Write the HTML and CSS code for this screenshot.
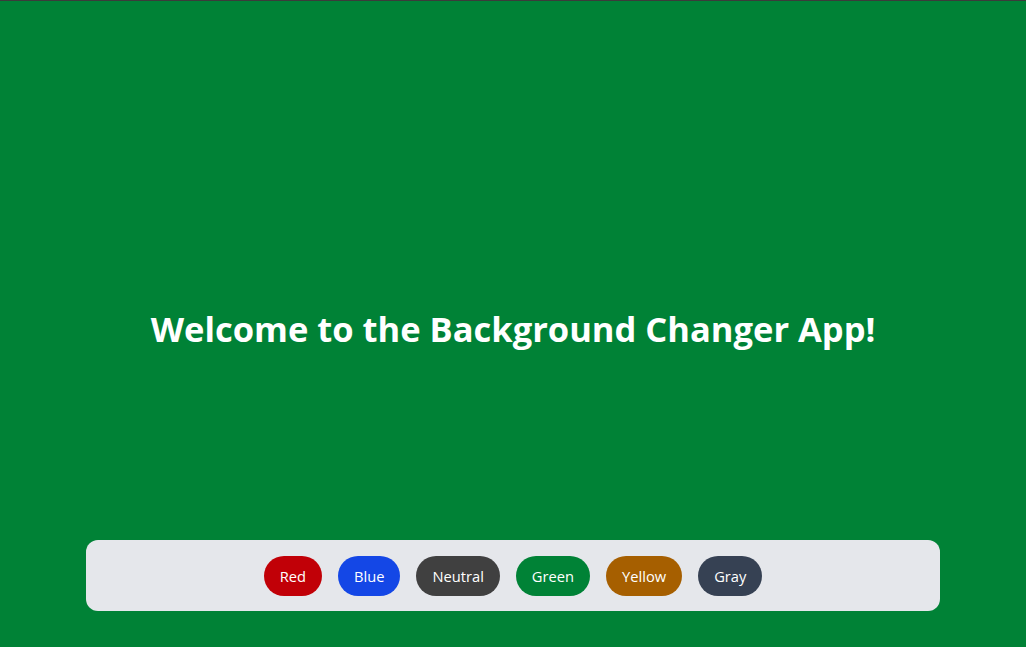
FILE: index.html
```html
<!DOCTYPE html>
<html lang="en">
<head>
<meta charset="UTF-8">
<title>Background Changer</title>
<link rel="stylesheet" href="styles.css">
</head>
<body>
<div class="app">
  <h1 class="title">Welcome to the Background Changer App!</h1>
  <div class="dock">
    <div class="bar">
      <button class="btn red">Red</button>
      <button class="btn blue">Blue</button>
      <button class="btn neutral">Neutral</button>
      <button class="btn green">Green</button>
      <button class="btn yellow">Yellow</button>
      <button class="btn gray">Gray</button>
    </div>
  </div>
</div>
</body>
</html>
```
FILE: styles.css
```css
* { box-sizing: border-box; }
html, body { margin: 0; padding: 0; }
body {
  font-family: "Open Sans", "Noto Sans", sans-serif;
  background: #008236;
  border-top: 1px solid #3b3b3b;
  height: 647px;
  overflow: hidden;
}
.app {
  height: 646px;
  display: grid;
  grid-template: 1fr / 1fr;
}
.title {
  grid-area: 1 / 1;
  margin: 0;
  align-self: center;
  justify-self: center;
  padding-top: 10px;
  color: #fff;
  font-size: 34.5px;
  font-weight: 700;
  line-height: 40px;
}
.dock {
  grid-area: 1 / 1;
  align-self: end;
  padding: 0 86px 36px;
}
.bar {
  background: #e5e7eb;
  border-radius: 12px;
  height: 71px;
  display: flex;
  align-items: center;
  justify-content: center;
  gap: 16px;
  padding-top: 1px;
}
.btn {
  border: 0;
  border-radius: 9999px;
  color: #fff;
  font-family: inherit;
  font-size: 14.7px;
  line-height: 24px;
  padding: 8px 16px;
  height: 40px;
}
.red { background: #c10007; }
.blue { background: #1447e6; }
.neutral { background: #404040; }
.green { background: #008236; }
.yellow { background: #a65f00; }
.gray { background: #364153; }
```
